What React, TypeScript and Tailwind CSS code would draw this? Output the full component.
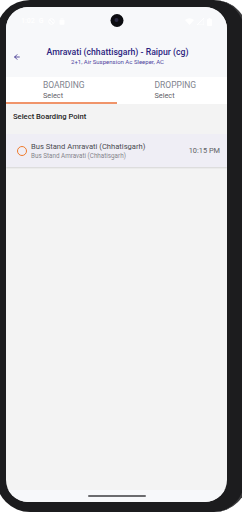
import { ArrowLeft } from "lucide-react";

function StatusBar() {
  return (
    <div className="relative flex h-[29px] items-center justify-between px-[15px] text-[7px] font-medium text-white">
      <div className="flex items-center gap-[4px] opacity-90">
        <span>1:02</span>
        <span className="font-bold">G</span>
        <svg width="7" height="7" viewBox="0 0 10 10">
          <circle cx="5" cy="5" r="4" fill="none" stroke="white" strokeWidth="1.4" />
          <path d="M2.2 2.2 L7.8 7.8" stroke="white" strokeWidth="1.4" />
        </svg>
        <svg width="6" height="7" viewBox="0 0 8 10">
          <rect x="0.5" y="2.5" width="7" height="7" rx="1" fill="white" />
          <path d="M2.5 2.5 V1.5 a1.5 1.5 0 0 1 3 0 V2.5" stroke="white" fill="none" />
        </svg>
      </div>
      <div className="absolute left-1/2 top-[7px] h-[13px] w-[13px] -translate-x-1/2 rounded-full bg-[#0c0c10]">
        <div className="ml-[4px] mt-[4px] h-[4px] w-[4px] rounded-full bg-[#2a2840]" />
      </div>
      <div className="flex items-center gap-[3px] opacity-90">
        <svg width="9" height="7" viewBox="0 0 12 9">
          <path d="M0 2.5 Q6 -2 12 2.5 L6 9 Z" fill="white" />
        </svg>
        <svg width="7" height="7" viewBox="0 0 10 10">
          <path d="M10 0 V10 H0 Z" fill="none" stroke="white" strokeWidth="1.2" />
        </svg>
        <svg width="5" height="8" viewBox="0 0 5 8">
          <rect x="0" y="1" width="5" height="7" rx="0.8" fill="white" />
          <rect x="1.5" y="0" width="2" height="1" fill="white" />
        </svg>
      </div>
    </div>
  );
}

export default function App() {
  return (
    <div className="relative h-[512px] w-[242px] overflow-hidden bg-white font-['Roboto',sans-serif]">
      <div className="ml-[-4px] h-[512px] w-[252px] rounded-[34px] border-r-[3px] border-[#3a3a3c] bg-[#1c1c1e] pl-[10px] pr-[18px] pt-[7px] pb-[10px]">
        <div className="flex h-[495px] flex-col overflow-hidden rounded-[22px] bg-[#f3f3f3]">
          <div className="bg-[#f7f8fa]">
            <StatusBar />
            <div className="flex h-[41px] items-center px-[7px]">
              <ArrowLeft className="h-[8px] w-[8px] shrink-0 text-[#3a2c8c]" strokeWidth={2.5} />
              <div className="flex flex-1 flex-col items-center pr-[6px]">
                <span className="text-[8.7px] font-medium leading-[11px] text-[#2c1f80]">
                  Amravati (chhattisgarh) - Raipur (cg)
                </span>
                <span className="text-[6px] leading-[8px] text-[#4f45a0]">
                  2+1, Air Suspension Ac Sleeper, AC
                </span>
              </div>
            </div>
          </div>

          <div className="flex bg-white">
            <div className="flex flex-1 flex-col border-b-2 border-[#f0946a] pt-[2px] pb-[1px]">
              <div className="ml-[37px] flex flex-col">
                <span className="text-[8.5px] leading-[12px] text-[#80838d]">BOARDING</span>
                <span className="text-[7.3px] leading-[10px] text-[#5f6168]">Select</span>
              </div>
            </div>
            <div className="flex flex-1 flex-col border-b-2 border-transparent pt-[2px] pb-[1px]">
              <div className="ml-[38px] flex flex-col">
                <span className="text-[8.5px] leading-[12px] text-[#80838d]">DROPPING</span>
                <span className="text-[7.3px] leading-[10px] text-[#5f6168]">Select</span>
              </div>
            </div>
          </div>

          <div className="px-[7px] pt-[8px] pb-[13px] text-[7.6px] font-medium leading-[9px] text-[#1f1f24]">
            Select Boarding Point
          </div>

          <div className="flex h-[33px] items-center bg-[#efeef5] pl-[11px] pr-[7px] shadow-[0_1px_1.5px_rgba(0,0,0,0.12)]">
            <div className="h-[10px] w-[10px] shrink-0 rounded-full border-[1.4px] border-[#f07b2c]" />
            <div className="ml-[4px] flex flex-1 flex-col">
              <span className="text-[7.6px] leading-[10px] text-[#4a4a50]">
                Bus Stand Amravati (Chhatisgarh)
              </span>
              <span className="text-[6.3px] leading-[8px] text-[#85858c]">
                Bus Stand Amravati (Chhatisgarh)
              </span>
            </div>
            <span className="text-[7.4px] text-[#5e5f65]">10:15 PM</span>
          </div>

          <div className="flex-1" />

          <div className="flex h-[12px] items-start justify-center bg-[#f7f8fa] pt-[5px]">
            <div className="h-[1.6px] w-[58px] rounded-full bg-[#6b6b6e]" />
          </div>
        </div>
      </div>
    </div>
  );
}
